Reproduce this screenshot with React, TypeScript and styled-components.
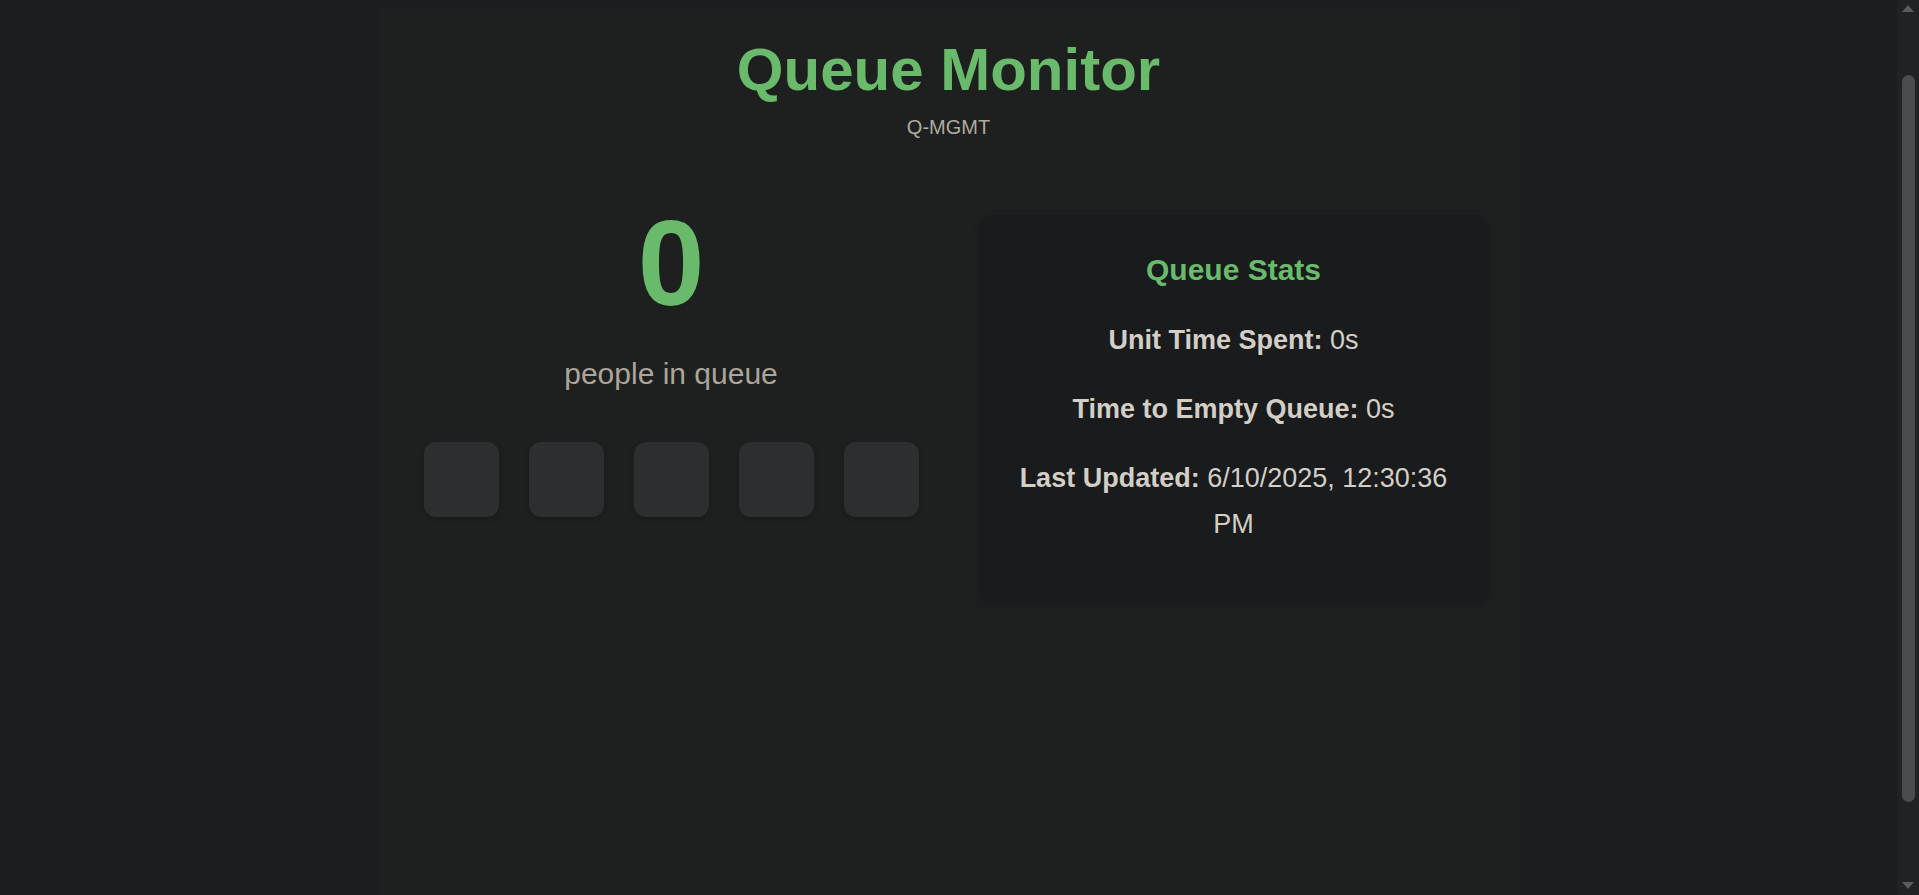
import React from "react";
import styled, { createGlobalStyle } from "styled-components";

const GlobalStyle = createGlobalStyle`
  html, body {
    margin: 0;
    background: #1b1d1e;
    font-family: "Liberation Sans", Arial, Helvetica, sans-serif;
  }
  * { box-sizing: border-box; }
`;

const Viewport = styled.div`
  display: flex;
  height: 100vh;
  overflow: hidden;
  background: #1b1d1e;
`;

const Content = styled.div`
  flex: 1;
  min-width: 0;
  padding: 7px 0;
  overflow: hidden;
`;

const Container = styled.main`
  width: 1140px;
  min-height: 1048px;
  margin: 0 auto;
  padding: 28px 30px 40px;
  background: #1e201f;
`;

const Header = styled.header`
  text-align: center;
  margin-bottom: 55px;
`;

const Title = styled.h1`
  margin: 0;
  font-size: 60px;
  font-weight: 700;
  line-height: normal;
  color: #69bb6b;
`;

const Subtitle = styled.div`
  margin-top: 12px;
  font-size: 20px;
  line-height: normal;
  color: #b0aa9f;
`;

const Grid = styled.section`
  display: grid;
  grid-template-columns: 1fr 510px;
  column-gap: 45px;
  align-items: start;
`;

const CountColumn = styled.div`
  display: flex;
  flex-direction: column;
  align-items: center;
`;

const Count = styled.div`
  font-size: 120px;
  font-weight: 700;
  line-height: normal;
  color: #69bb6b;
`;

const CountLabel = styled.div`
  margin-top: 25px;
  font-size: 30px;
  line-height: normal;
  color: #aca59b;
`;

const Slots = styled.div`
  display: flex;
  gap: 30px;
  margin-top: 51px;
`;

const Slot = styled.div`
  width: 75px;
  height: 75px;
  border-radius: 12px;
  background: #2b2f30;
  box-shadow: 0 2px 6px rgba(0, 0, 0, 0.18);
`;

const StatsCard = styled.div`
  margin-top: 21px;
  padding: 38px 30px 58px;
  border-radius: 15px;
  background: #191b1c;
  box-shadow: 0 2px 8px rgba(0, 0, 0, 0.12);
  text-align: center;
`;

const StatsTitle = styled.h3`
  margin: 0 0 30px;
  font-size: 30px;
  font-weight: 700;
  line-height: normal;
  color: #69bb6b;
`;

const StatList = styled.div`
  display: flex;
  flex-direction: column;
  gap: 23px;
`;

const StatLine = styled.p`
  margin: 0;
  font-size: 27px;
  line-height: 46px;
  color: #d3cec6;

  strong {
    font-weight: 700;
  }
`;

/* Page scrollbar as it appears in the screenshot */
const ScrollBar = styled.aside`
  width: 22px;
  flex: none;
  display: flex;
  flex-direction: column;
  align-items: center;
  background: #202324;
`;

const Arrow = styled.div<{ $dir: "up" | "down" }>`
  width: 0;
  height: 0;
  margin: ${(p) => (p.$dir === "up" ? "5px 0 0" : "0 0 6px")};
  border-left: 6px solid transparent;
  border-right: 6px solid transparent;
  ${(p) =>
    p.$dir === "up"
      ? "border-bottom: 7px solid #595d5f;"
      : "border-top: 7px solid #595d5f;"}
`;

const Track = styled.div`
  flex: 1;
  width: 100%;
  display: flex;
  justify-content: center;
  padding-top: 63px;
  padding-bottom: 80px;
`;

const Thumb = styled.div`
  width: 13px;
  height: 100%;
  border-radius: 7px;
  background: #494d4f;
`;

const stats = [
  { label: "Unit Time Spent:", value: "0s" },
  { label: "Time to Empty Queue:", value: "0s" },
  { label: "Last Updated:", value: "6/10/2025, 12:30:36 PM" },
];

export default function App() {
  return (
    <>
      <GlobalStyle />
      <Viewport>
        <Content>
          <Container>
            <Header>
              <Title>Queue Monitor</Title>
              <Subtitle>Q-MGMT</Subtitle>
            </Header>
            <Grid>
              <CountColumn>
                <Count>0</Count>
                <CountLabel>people in queue</CountLabel>
                <Slots>
                  {Array.from({ length: 5 }).map((_, i) => (
                    <Slot key={i} />
                  ))}
                </Slots>
              </CountColumn>
              <StatsCard>
                <StatsTitle>Queue Stats</StatsTitle>
                <StatList>
                  {stats.map((s) => (
                    <StatLine key={s.label}>
                      <strong>{s.label}</strong> {s.value}
                    </StatLine>
                  ))}
                </StatList>
              </StatsCard>
            </Grid>
          </Container>
        </Content>
        <ScrollBar aria-hidden="true">
          <Arrow $dir="up" />
          <Track>
            <Thumb />
          </Track>
          <Arrow $dir="down" />
        </ScrollBar>
      </Viewport>
    </>
  );
}
